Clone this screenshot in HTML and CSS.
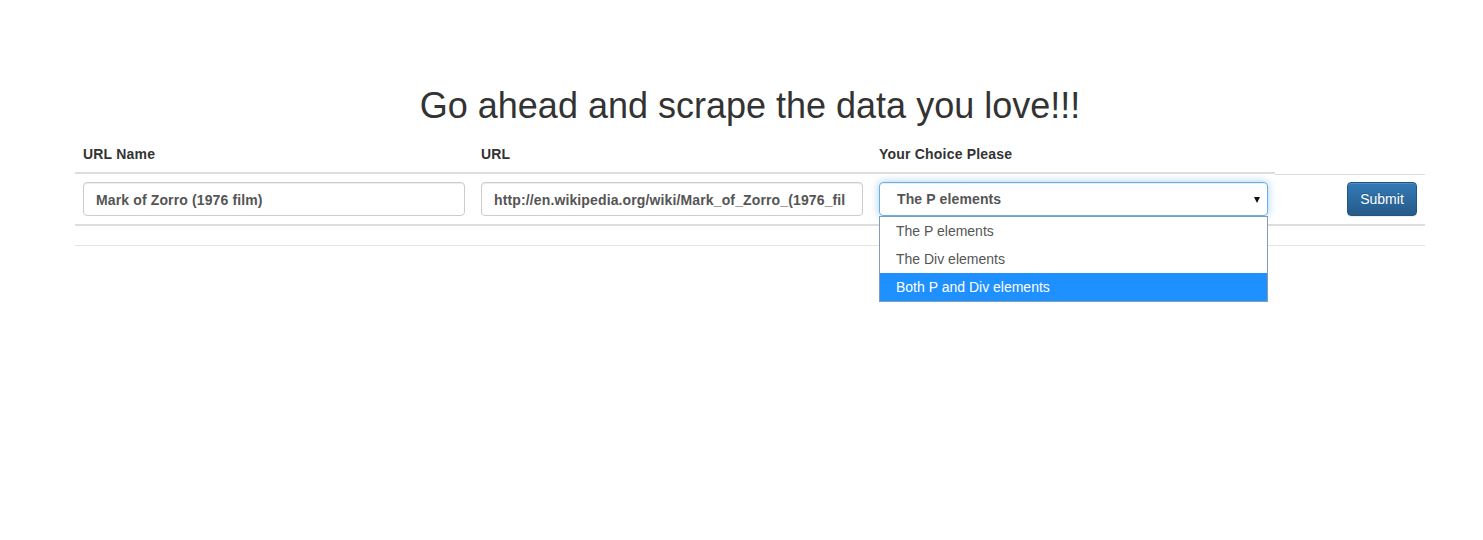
FILE: index.html
```html
<!DOCTYPE html>
<html>
<head>
<meta charset="utf-8">
<link rel="stylesheet" href="styles.css">
</head>
<body>
<div class="container">
  <h1 class="title">Go ahead and scrape the data you love!!!</h1>
  <table class="grid">
    <colgroup>
      <col class="c1"><col class="c2"><col class="c3"><col class="c4">
    </colgroup>
    <thead>
      <tr>
        <th>URL Name</th>
        <th>URL</th>
        <th>Your Choice Please</th>
      </tr>
    </thead>
    <tbody>
      <tr class="row">
        <td><div class="field"><div class="field-text">Mark of Zorro (1976 film)</div></div></td>
        <td><div class="field"><div class="field-text">http://en.wikipedia.org/wiki/Mark_of_Zorro_(1976_fil</div></div></td>
        <td>
          <div class="select-wrap">
            <div class="select">
              <span class="select-text">The P elements</span>
              <span class="arrow"></span>
            </div>
            <ul class="menu">
              <li class="opt">The P elements</li>
              <li class="opt">The Div elements</li>
              <li class="opt active">Both P and Div elements</li>
            </ul>
          </div>
        </td>
        <td class="btn-cell"><button class="btn">Submit</button></td>
      </tr>
    </tbody>
    <tbody class="foot">
      <tr><td colspan="4" class="spacer"></td></tr>
    </tbody>
  </table>
</div>
</body>
</html>
```
FILE: styles.css
```css
html {
  min-height: 100%;
  background: #fff;
}
body {
  margin: 0;
  padding: 0;
  min-height: 540px;
  font-family: "Liberation Sans", Arial, Helvetica, sans-serif;
  font-size: 14px;
  line-height: 20px;
  color: #333;
}
.container {
  margin-left: 75px;
  width: 1350px;
  padding-top: 64px;
}
.title {
  margin: 22px 0 10px;
  font-size: 36px;
  line-height: 39.6px;
  font-weight: 400;
  text-align: center;
  color: #333;
}
.grid {
  width: 1350px;
  table-layout: fixed;
  border-collapse: separate;
  border-spacing: 0;
}
.c1 { width: 398px; }
.c2 { width: 398px; }
.c3 { width: 404px; }
.c4 { width: 150px; }
.grid th {
  text-align: left;
  font-weight: 700;
  letter-spacing: 0.2px;
  padding: 8px;
  line-height: 20px;
  border-bottom: 2px solid #ddd;
  vertical-align: bottom;
}
.row td {
  padding: 7px 8px 8px;
  vertical-align: top;
  border-top: 1px solid transparent;
  border-bottom: 2px solid #ddd;
}
.row td.btn-cell {
  border-top-color: #ddd;
  text-align: right;
}
.spacer {
  height: 19px;
  padding: 0;
  border-bottom: 1px solid #e5e5e5;
}
.field {
  box-sizing: border-box;
  height: 34px;
  padding: 7px 12px 6px;
  border: 1px solid #ccc;
  border-radius: 4px;
  box-shadow: inset 0 1px 1px rgba(0,0,0,0.075);
}
.field-text {
  font-weight: 700;
  letter-spacing: 0.13px;
  color: #555;
  white-space: nowrap;
}
.select-wrap {
  position: relative;
  width: 389px;
}
.select {
  box-sizing: border-box;
  height: 34px;
  border: 1px solid #66afe9;
  border-radius: 4px;
  box-shadow: inset 0 1px 1px rgba(0,0,0,0.075), 0 0 8px rgba(102,175,233,0.6);
  display: flex;
  align-items: center;
  padding: 0 7px 0 17px;
}
.select-text {
  flex: 1;
  font-weight: 700;
  letter-spacing: 0.13px;
  color: #555;
}
.arrow {
  width: 0;
  height: 0;
  border-left: 3.5px solid transparent;
  border-right: 3.5px solid transparent;
  border-top: 6px solid #111;
  margin-top: 2px;
}
.menu {
  position: absolute;
  top: 34px;
  left: 0;
  width: 389px;
  box-sizing: border-box;
  margin: 0;
  padding: 0;
  list-style: none;
  background: #fff;
  border: 1px solid #7f9db9;
  z-index: 5;
}
.opt {
  height: 28px;
  line-height: 28px;
  padding-left: 16px;
  color: #555;
}
.opt.active {
  background: #1e90ff;
  color: #fff;
}
.btn {
  display: inline-block;
  box-sizing: border-box;
  width: 70px;
  height: 34px;
  padding: 6px 12px;
  margin: 0;
  font-family: "Liberation Sans", Arial, sans-serif;
  font-size: 14px;
  line-height: 20px;
  color: #fff;
  border: 1px solid #245580;
  border-radius: 4px;
  background: linear-gradient(to bottom, #337ab7 0%, #265a88 100%);
  box-shadow: inset 0 1px 0 rgba(255,255,255,0.15), 0 1px 1px rgba(0,0,0,0.075);
  text-shadow: 0 -1px 0 rgba(0,0,0,0.2);
  cursor: pointer;
}
```
